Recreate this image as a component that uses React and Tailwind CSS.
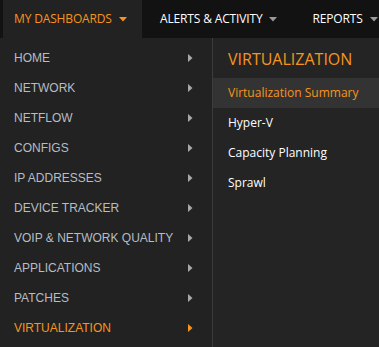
export default function App() {
  const left = [
    "HOME",
    "NETWORK",
    "NETFLOW",
    "CONFIGS",
    "IP ADDRESSES",
    "DEVICE TRACKER",
    "VOIP & NETWORK QUALITY",
    "APPLICATIONS",
    "PATCHES",
    "VIRTUALIZATION",
  ];
  const right = ["Virtualization Summary", "Hyper-V", "Capacity Planning", "Sprawl"];
  const Caret = ({ color }) => (
    <svg width="8" height="5" viewBox="0 0 8 5" className="ml-[7px]">
      <path d="M0 0 L8 0 L4 4.5 Z" fill={color} />
    </svg>
  );
  const Arrow = ({ color }) => (
    <svg width="5" height="8" viewBox="0 0 5 8">
      <path d="M0 0 L4.5 4 L0 8 Z" fill={color} />
    </svg>
  );
  return (
    <div className="w-[379px] h-[347px] overflow-hidden bg-[#222222] flex flex-col" style={{ fontFamily: '"Open Sans", sans-serif' }}>
      <div className="h-[38px] bg-[#121212] flex items-stretch pl-[3px] text-[12px] shrink-0">
        <div className="w-[139px] bg-[#222222] flex items-center pl-[11px] text-[#f7941d] tracking-[-0.15px]">
          MY DASHBOARDS
          <Caret color="#f7941d" />
        </div>
        <div className="flex items-center pl-[18px] text-white tracking-[-0.15px]">
          ALERTS &amp; ACTIVITY
          <Caret color="#9a9a9a" />
        </div>
        <div className="flex items-center pl-[35px] text-white tracking-[-0.15px]">
          REPORTS
          <Caret color="#9a9a9a" />
        </div>
      </div>
      <div className="flex flex-1">
        <div className="w-[212px] pt-[5px] shrink-0" style={{ fontFamily: '"Liberation Sans", Arial, sans-serif' }}>
          {left.map((t) => {
            const active = t === "VIRTUALIZATION";
            return (
              <div key={t} className="h-[30px] flex items-center justify-between pl-[14px] pr-[19px] text-[12px]">
                <span className={active ? "text-[#f7941d]" : "text-[#b6bdc4]"}>{t}</span>
                <Arrow color={active ? "#f7941d" : "#a8a8a8"} />
              </div>
            );
          })}
        </div>
        <div className="flex-1 border-l border-[#3c3c3c] bg-[#242424]">
          <div className="h-[40px] flex items-center pl-[15px] text-[16px] text-[#f7941d] pt-[1px]">VIRTUALIZATION</div>
          {right.map((t, i) => (
            <div
              key={t}
              className={
                "h-[30px] flex items-center pl-[15px] text-[12px] font-medium " +
                (i === 0 ? "bg-[#333333] text-[#f7941d]" : "text-white")
              }
            >
              {t}
            </div>
          ))}
        </div>
      </div>
    </div>
  );
}
